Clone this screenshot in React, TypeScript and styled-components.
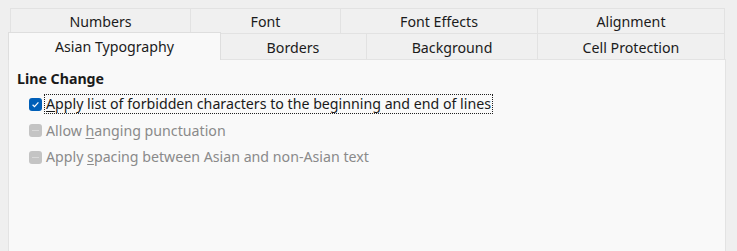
import styled, { createGlobalStyle } from "styled-components";

const GlobalStyle = createGlobalStyle`
  html, body {
    margin: 0;
    padding: 0;
    background: #efefef;
  }
  body {
    font-family: "Noto Sans", "Open Sans", "DejaVu Sans", sans-serif;
    font-size: 14.2px;
    color: #1a1a1a;
  }
`;

const Window = styled.div`
  height: 251px;
  box-sizing: border-box;
  padding: 8px 11px 0 8px;
  display: flex;
  flex-direction: column;
  overflow: hidden;
`;

const TabRows = styled.div`
  display: flex;
  flex-direction: column;
  padding: 0 2px;
`;

const TabRow = styled.div<{ $height: number }>`
  display: flex;
  height: ${(p) => p.$height}px;
`;

const Tab = styled.div<{ $width: number; $selected?: boolean }>`
  box-sizing: border-box;
  width: ${(p) => p.$width}px;
  flex: none;
  display: flex;
  align-items: center;
  justify-content: center;
  background: #f0f0f0;
  border: 1px solid #e2e2e2;
  border-bottom: none;
  margin-right: -1px;
  color: #1b1b1b;
  white-space: nowrap;
  padding-top: 1px;

  ${(p) =>
    p.$selected &&
    `
    position: relative;
    z-index: 1;
    background: #f9f9f9;
    border-color: #dedede;
    margin: -1px 0 -1px -2px;
    width: ${p.$width + 4}px;
    padding-top: 0;
    & + * { margin-left: -2px; }
  `}
`;

const Panel = styled.div`
  flex: 1;
  background: #f9f9f9;
  border: 1px solid #e3e3e3;
  border-bottom: none;
  padding: 8px 8px 0 8px;
`;

const GroupTitle = styled.div`
  font-weight: bold;
  height: 22px;
  line-height: 22px;
  margin-bottom: 1px;
`;

const OptionList = styled.div`
  display: flex;
  flex-direction: column;
  padding-left: 12px;
`;

const Option = styled.div<{ $disabled?: boolean }>`
  display: flex;
  align-items: center;
  height: 26.5px;
  color: ${(p) => (p.$disabled ? "#8a8a8a" : "#1a1a1a")};
`;

const Box = styled.span<{ $checked?: boolean }>`
  flex: none;
  width: 13px;
  height: 13px;
  border-radius: 3px;
  background: ${(p) => (p.$checked ? "#005fb8" : "#c4c4c4")};
  display: flex;
  align-items: center;
  justify-content: center;
  margin-right: 3px;
`;

const Dash = styled.span`
  width: 7px;
  height: 1px;
  background: #d9d9d9;
`;

const Label = styled.span<{ $focused?: boolean }>`
  padding: 0 1px;
  line-height: 18px;
  outline: ${(p) => (p.$focused ? "1px dotted #202020" : "none")};
  white-space: nowrap;
`;

const Key = styled.span`
  text-decoration: underline;
  text-underline-offset: 2px;
`;

const row1 = [
  { label: "Numbers", width: 181 },
  { label: "Font", width: 151 },
  { label: "Font Effects", width: 198 },
  { label: "Alignment", width: 188 },
];

const row2 = [
  { label: "Asian Typography", width: 209, selected: true },
  { label: "Borders", width: 148 },
  { label: "Background", width: 172 },
  { label: "Cell Protection", width: 188 },
];

const Check = () => (
  <svg width="9" height="9" viewBox="0 0 9 9">
    <path d="M1.6 4.8 L3.5 6.6 L7.4 2.4" fill="none" stroke="#ffffff" strokeWidth="1.2" />
  </svg>
);

export default function App() {
  return (
    <>
      <GlobalStyle />
      <Window>
        <TabRows>
          <TabRow $height={25}>
            {row1.map((t) => (
              <Tab key={t.label} $width={t.width}>
                {t.label}
              </Tab>
            ))}
          </TabRow>
          <TabRow $height={26}>
            {row2.map((t) => (
              <Tab key={t.label} $width={t.width} $selected={t.selected}>
                {t.label}
              </Tab>
            ))}
          </TabRow>
        </TabRows>
        <Panel>
          <GroupTitle>Line Change</GroupTitle>
          <OptionList>
            <Option>
              <Box $checked>
                <Check />
              </Box>
              <Label $focused>
                <Key>A</Key>pply list of forbidden characters to the beginning and end of lines
              </Label>
            </Option>
            <Option $disabled>
              <Box>
                <Dash />
              </Box>
              <Label>
                Allow <Key>h</Key>anging punctuation
              </Label>
            </Option>
            <Option $disabled>
              <Box>
                <Dash />
              </Box>
              <Label>
                Apply <Key>s</Key>pacing between Asian and non-Asian text
              </Label>
            </Option>
          </OptionList>
        </Panel>
      </Window>
    </>
  );
}
